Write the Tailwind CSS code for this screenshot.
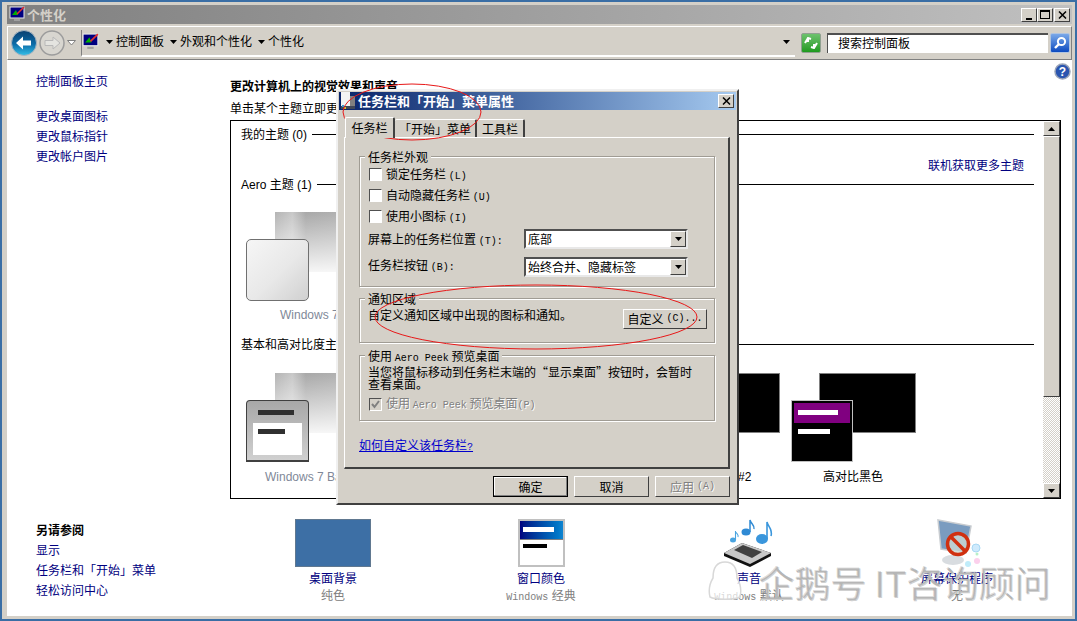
<!DOCTYPE html>
<html lang="zh-CN">
<head>
    <meta charset="UTF-8">
    <title>个性化</title>
    <script src="https://cdn.jsdelivr.net/npm/@tailwindcss/browser@4"></script>
</head>
<body class="w-[1077px] h-[621px] overflow-hidden bg-[#3a6ea5] font-['Liberation_Sans','Noto_Sans_CJK_SC',sans-serif] text-[12px] leading-[14px] text-black">
    <div class="relative w-[1077px] h-[621px] p-[2px]">

        <!-- main window -->
        <div class="flex flex-col w-[1073px] h-[617px] bg-[#d4d0c8] pt-[3px] pl-[5px] pr-[3px] pb-[3px]">
            <!-- title bar -->
            <div class="flex items-center h-[19px] shrink-0 pl-[2px] pr-[2px] bg-gradient-to-r from-[#808080] to-[#c0c0c0]">
                <svg width="17" height="17" viewBox="0 0 17 17">
                    <rect x="1" y="1" width="14" height="11" fill="#000080" stroke="#e8e8e8"/>
                    <path d="M3 9 L7 4 L9 9Z" fill="#00b000"/>
                    <path d="M8 8 L15 1" stroke="#e03030" stroke-width="1.6"/>
                    <rect x="5" y="13" width="6" height="2" fill="#a0a0a0"/>
                </svg>
                <span class="ml-[1px] font-bold text-[#d4d0c8] text-[13px] font-['Noto_Sans_CJK_SC']">个性化</span>
                <div class="ml-auto flex">
                    <div class="w-[16px] h-[14px] bg-[#d4d0c8] border-t border-l border-white border-r border-b border-r-[#404040] border-b-[#404040] flex items-end justify-center pb-[1px]"><div class="w-[6px] h-[2px] bg-black"></div></div>
                    <div class="w-[16px] h-[14px] bg-[#d4d0c8] border-t border-l border-white border-r border-b border-r-[#404040] border-b-[#404040] flex items-center justify-center"><div class="w-[10px] h-[9px] border border-t-2 border-black"></div></div>
                    <div class="ml-[1px] w-[16px] h-[14px] bg-[#d4d0c8] border-t border-l border-white border-r border-b border-r-[#404040] border-b-[#404040] flex items-center justify-center">
                        <svg width="9" height="8" viewBox="0 0 9 8"><path d="M1 0.5 L8 7.5 M8 0.5 L1 7.5" stroke="#000" stroke-width="1.5"/></svg>
                    </div>
                </div>
            </div>

            <!-- toolbar -->
            <div class="flex items-center h-[34px] shrink-0 mt-[2px] border border-t-white border-l-white border-r-[#808080] border-b-[#808080] pl-[2px] pr-[1px]">
                <svg width="28" height="28" viewBox="0 0 28 28">
                    <defs><linearGradient id="bk" x1="0" y1="0" x2="0" y2="1"><stop offset="0" stop-color="#0a3f70"/><stop offset="0.55" stop-color="#0c6ca8"/><stop offset="1" stop-color="#35c0e8"/></linearGradient></defs>
                    <circle cx="14" cy="14" r="12.5" fill="url(#bk)" stroke="#a8b4c0"/>
                    <path d="M6 14 L13 7.5 V11.5 H21 V16.5 H13 V20.5Z" fill="#fff"/>
                </svg>
                <svg class="ml-[1px]" width="27" height="28" viewBox="0 0 27 28">
                    <circle cx="13" cy="14" r="12" fill="#d8d6d0" stroke="#9c9c9c" stroke-width="1.5"/>
                    <path d="M21 14 L14 8 V11.5 H6 V16.5 H14 V20Z" fill="#e4e4e0" stroke="#b8b8b8"/>
                </svg>
                <svg class="ml-[1px]" width="9" height="6" viewBox="0 0 9 6"><path d="M0.5 0.5 H8.5 L4.5 5Z" fill="#fff" stroke="#808080"/></svg>
                <!-- address box -->
                <div class="flex items-center w-[714px] h-[27px] ml-[5px] border-l border-l-[#808080] border-b-2 border-b-white">
                    <svg width="18" height="18" viewBox="0 0 17 17">
                        <rect x="1" y="1" width="14" height="11" fill="#000080" stroke="#e8e8e8"/>
                        <path d="M3 9 L7 4 L9 9Z" fill="#00b000"/>
                        <path d="M8 8 L15 1" stroke="#e03030" stroke-width="1.6"/>
                        <rect x="5" y="13" width="6" height="2" fill="#a0a0a0"/>
                    </svg>
                    <svg class="ml-[6px]" width="7" height="4" viewBox="0 0 7 4"><path d="M0 0 H7 L3.5 4Z"/></svg>
                    <span class="ml-[3px]">控制面板</span>
                    <svg class="ml-[6px]" width="7" height="4" viewBox="0 0 7 4"><path d="M0 0 H7 L3.5 4Z"/></svg>
                    <span class="ml-[3px]">外观和个性化</span>
                    <svg class="ml-[6px]" width="7" height="4" viewBox="0 0 7 4"><path d="M0 0 H7 L3.5 4Z"/></svg>
                    <span class="ml-[3px]">个性化</span>
                    <svg class="ml-auto mr-[5px]" width="7" height="4" viewBox="0 0 7 4"><path d="M0 0 H7 L3.5 4Z"/></svg>
                </div>
                <!-- refresh -->
                <div class="ml-[6px] w-[20px] h-[20px] rounded-[2px] border border-[#90a090] bg-gradient-to-b from-[#6cc26c] to-[#1c9a1c] flex items-center justify-center">
                    <svg width="14" height="12" viewBox="0 0 14 12"><path d="M1 6 L4 1 L7 2 M4 1 V5 M13 6 L10 11 L7 10 M10 11 V7" fill="none" stroke="#fff" stroke-width="2"/></svg>
                </div>
                <!-- search -->
                <div class="ml-[6px] w-[221px] h-[20px] bg-white border-t-2 border-l border-[#505050] flex items-center pl-[10px]">搜索控制面板</div>
                <div class="ml-[2px] w-[20px] h-[20px] rounded-[2px] border border-[#b0c4e0] bg-gradient-to-b from-[#7aa8e8] to-[#0a4ac0] flex items-center justify-center">
                    <svg width="14" height="14" viewBox="0 0 14 14"><circle cx="8.5" cy="5.5" r="3.6" fill="none" stroke="#fff" stroke-width="2"/><path d="M6 8 L2 12" stroke="#fff" stroke-width="2.4"/></svg>
                </div>
            </div>

            <!-- content area -->
            <div class="relative flex-1 bg-white flex">
                <!-- help -->
                <svg class="absolute top-[3px] right-[1px]" width="17" height="17" viewBox="0 0 17 17">
                    <circle cx="8.5" cy="8.5" r="7.5" fill="#2a55b0" stroke="#9aa4b8" stroke-width="1.5"/>
                    <text x="8.5" y="13" text-anchor="middle" font-size="12" font-weight="700" font-family="Liberation Sans" fill="#fff">?</text>
                </svg>

                <!-- left column -->
                <div class="w-[223px] shrink-0 pl-[29px] pt-[15px] flex flex-col text-[#000080]">
                    <a>控制面板主页</a>
                    <a class="mt-[21px]">更改桌面图标</a>
                    <a class="mt-[6px]">更改鼠标指针</a>
                    <a class="mt-[6px]">更改帐户图片</a>
                    <div class="mt-auto mb-[18px] flex flex-col gap-[6px]">
                        <span class="font-bold text-black">另请参阅</span>
                        <a>显示</a>
                        <a>任务栏和「开始」菜单</a>
                        <a>轻松访问中心</a>
                    </div>
                </div>

                <!-- right column -->
                <div class="flex-1 flex flex-col pt-[20px] pr-[11px]">
                    <h1 class="font-bold">更改计算机上的视觉效果和声音</h1>
                    <p class="mt-[8px]">单击某个主题立即更改桌面背景、窗口玻璃颜色、声音和屏幕保护程序。</p>

                    <!-- theme list -->
                    <div class="mt-[4px] h-[379px] border border-black flex">
                        <div class="flex-1 relative pl-[10px] pr-[9px] pt-[7px] flex flex-col">
                            <div class="flex items-center gap-[5px]"><span>我的主题 (0)</span><div class="flex-1 h-px mb-[2px] bg-black"></div></div>
                            <div class="text-right pr-[10px] mt-[17px] text-[#000080]">联机获取更多主题</div>
                            <div class="flex items-center gap-[5px] mt-[5px]"><span>Aero 主题 (1)</span><div class="flex-1 h-px mb-[2px] bg-black"></div></div>

                            <!-- aero thumb -->
                            <div class="relative mt-[20px] h-[89px]">
                                <div class="absolute left-[34px] top-0 w-[96px] h-[60px] bg-[linear-gradient(to_right,#b4b4b4,#c8c8c8_18%,#a8a8a8_32%,#b8b8b8)]">
                                    <div class="h-full bg-gradient-to-t from-white/90 to-transparent"></div>
                                </div>
                                <div class="absolute left-[5px] top-[27px] w-[63px] h-[62px] rounded-[5px] border border-[#707070] bg-[linear-gradient(135deg,#f6f6f6,#e8e8e8_55%,#d0d0d0)]"></div>
                            </div>
                            <div class="mt-[7px] pl-[39px] text-[#808898]">Windows 7</div>
                            <div class="mt-[16px] flex items-center gap-[5px]"><span>基本和高对比度主题</span><div class="flex-1 h-px mb-[2px] bg-black"></div></div>

                            <!-- basic + high contrast thumbs -->
                            <div class="relative mt-[21px] h-[89px]">
                                <div class="absolute left-[34px] top-0 w-[96px] h-[60px] bg-[linear-gradient(to_right,#b4b4b4,#c8c8c8_18%,#a8a8a8_32%,#b8b8b8)]">
                                    <div class="h-full bg-gradient-to-t from-white/90 to-transparent"></div>
                                </div>
                                <div class="absolute left-[5px] top-[27px] w-[63px] h-[62px] rounded-t-[4px] border border-[#404040] border-b-2 bg-gradient-to-b from-[#a8a8a8] to-[#d0d0d0] px-[6px] pt-[9px]">
                                    <div class="h-[5px] w-[36px] mx-[5px] bg-[#303030]"></div>
                                    <div class="mt-[8px] h-[32px] bg-white pt-[6px] pl-[5px]"><div class="h-[5px] w-[27px] bg-[#303030]"></div></div>
                                </div>
                                <div class="absolute left-[496px] top-0 w-[43px] h-[60px] bg-black border border-[#808080]"></div>
                                <div class="absolute left-[578px] top-0 w-[97px] h-[60px] bg-black border border-[#808080]"></div>
                                <div class="absolute left-[550px] top-[27px] w-[62px] h-[62px] bg-black border border-[#c0c0c0] p-[2px]">
                                    <div class="h-[20px] bg-[#800080] pt-[7px] pl-[4px]"><div class="h-[5px] w-[40px] bg-white"></div></div>
                                    <div class="mt-[6px] ml-[4px] h-[5px] w-[32px] bg-white"></div>
                                </div>
                            </div>
                            <div class="relative mt-[8px] h-[14px]">
                                <span class="absolute left-[24px] text-[#808898]">Windows 7 Basic</span>
                                <span class="absolute left-[497px]">#2</span>
                                <span class="absolute left-[582px]">高对比黑色</span>
                            </div>
                        </div>
                        <!-- scrollbar -->
                        <div class="w-[17px] flex flex-col bg-[repeating-conic-gradient(#d4d0c8_0_25%,#fff_0_50%)] bg-[length:2px_2px]">
                            <div class="h-[15px] bg-[#d4d0c8] border border-t-white border-l-white border-r-[#404040] border-b-[#404040] flex items-center justify-center"><svg width="7" height="4" viewBox="0 0 7 4"><path d="M0 4 H7 L3.5 0Z"/></svg></div>
                            <div class="h-[261px] bg-[#d4d0c8] border border-t-white border-l-white border-r-[#404040] border-b-[#404040]"></div>
                            <div class="mt-auto h-[15px] bg-[#d4d0c8] border border-t-white border-l-white border-r-[#404040] border-b-[#404040] flex items-center justify-center"><svg width="7" height="4" viewBox="0 0 7 4"><path d="M0 0 H7 L3.5 4Z"/></svg></div>
                        </div>
                    </div>

                    <!-- see-also strip -->
                    <div class="grid grid-cols-[repeat(4,208px)] mt-[20px] -ml-[1px] text-center text-[#000080]">
                        <div class="flex flex-col items-center">
                            <div class="h-[48px] w-[76px] bg-[#3d6fa5] border border-[#607890]"></div>
                            <span class="mt-[5px]">桌面背景</span>
                            <span class="mt-[3px] text-[#808080]">纯色</span>
                        </div>
                        <div class="flex flex-col items-center">
                            <div class="h-[48px] w-[47px] bg-white border-2 border-[#c0c0c0]">
                                <div class="h-[19px] bg-gradient-to-r from-[#000080] to-[#1084d0] border-b border-[#808080] pt-[6px] pl-[3px]"><div class="h-[5px] w-[31px] bg-white"></div></div>
                                <div class="mt-[4px] ml-[3px] h-[4px] w-[24px] bg-black"></div>
                            </div>
                            <span class="mt-[5px]">窗口颜色</span>
                            <span class="mt-[3px] text-[#808080]"><span class="font-['Liberation_Mono'] text-[10px]">Windows</span> 经典</span>
                        </div>
                        <div class="flex flex-col items-center">
                            <svg width="50" height="48" viewBox="0 0 50 48">
                                <path d="M0 34 L18 24 L47 34 L47 37 L26 48 L0 37Z" fill="#101010"/>
                                <path d="M0 34 L18 24 L47 34 L26 45Z" fill="#c8c8c8"/>
                                <path d="M10 31 L19 26 L38 33 L28 39Z" fill="#404040"/>
                                <ellipse cx="38" cy="20" rx="6" ry="5" fill="#3a96dc"/>
                                <path d="M43 20 V3 C44 8 49 10 47 17" fill="none" stroke="#3a96dc" stroke-width="1.6"/>
                                <ellipse cx="22" cy="13" rx="4.5" ry="3.5" fill="#2f8ad4"/>
                                <path d="M26 13 V1 C27 5 31 6 30 10" fill="none" stroke="#2f8ad4" stroke-width="1.5"/>
                                <ellipse cx="9" cy="21" rx="3" ry="2.5" fill="#4aa4e0"/>
                                <path d="M11.5 21 V12 C12 15 15 15 14 18" fill="none" stroke="#4aa4e0" stroke-width="1.1"/>
                            </svg>
                            <span class="mt-[5px]">声音</span>
                            <span class="mt-[3px] text-[#808080]"><span class="font-['Liberation_Mono'] text-[10px]">Windows</span> 默认</span>
                        </div>
                        <div class="flex flex-col items-center">
                            <svg width="52" height="48" viewBox="0 0 52 48">
                                <ellipse cx="22" cy="41" rx="11" ry="5" fill="#d8dce0"/>
                                <path d="M7 1 L40 7 L35 34 L10 30Z" fill="#7a9cc0" stroke="#c8ccd0" stroke-width="1.5"/>
                                <circle cx="27" cy="25" r="10.5" fill="#d8e4d8" fill-opacity="0.7" stroke="#d03010" stroke-width="3.5"/>
                                <path d="M20 18 L34 32" stroke="#d03010" stroke-width="3.5"/>
                                <circle cx="45" cy="29" r="4" fill="#cfeafc" stroke="#a8d8f4"/>
                                <circle cx="46" cy="35" r="1.5" fill="#b8f0c8"/>
                                <circle cx="46" cy="42" r="3" fill="#fcd0ec"/>
                                <circle cx="37" cy="45" r="3" fill="#c0ecfa"/>
                            </svg>
                            <span class="mt-[5px]">屏幕保护程序</span>
                            <span class="mt-[3px] text-[#808080]">无</span>
                        </div>
                    </div>
                </div>
            </div>
        </div>

        <!-- properties dialog -->
        <div class="absolute left-[336px] top-[89px] w-[403px] h-[416px] bg-[#d4d0c8] border-2 border-t-[#f0f0f0] border-l-[#f0f0f0] border-r-[#404040] border-b-[#404040] p-px font-['Noto_Sans_CJK_SC','Liberation_Sans',sans-serif]">
            <div class="flex items-center h-[18px] bg-gradient-to-r from-[#0a246a] to-[#a6caf0] pr-[2px]">
                <svg width="16" height="18" viewBox="0 0 16 18">
                    <rect x="2" y="0" width="9" height="14" fill="#f4f4f4"/>
                    <rect x="11" y="4" width="5" height="10" fill="#808080"/>
                    <rect x="2" y="14" width="14" height="3" fill="#404858"/>
                    <rect x="3" y="13" width="2" height="2" fill="#3a9ad0"/>
                    <rect x="5" y="15" width="2" height="2" fill="#e0c030"/>
                </svg>
                <span class="ml-[3px] font-bold text-[13px] text-white">任务栏和「开始」菜单属性</span>
                <div class="ml-auto w-[16px] h-[14px] bg-[#d4d0c8] border border-t-white border-l-white border-r-[#404040] border-b-[#404040] flex items-center justify-center">
                    <svg width="9" height="8" viewBox="0 0 9 8"><path d="M1 0.5 L8 7.5 M8 0.5 L1 7.5" stroke="#000" stroke-width="1.5"/></svg>
                </div>
            </div>

            <!-- tabs -->
            <div class="flex items-end h-[20px] mt-[7px] ml-[6px]">
                <div class="relative z-10 w-[50px] h-[21px] -mb-px bg-[#d4d0c8] border-t border-l border-white border-r-2 border-r-[#404040] rounded-t-[2px] flex items-center justify-center">任务栏</div>
                <div class="w-[82px] h-[18px] border-t border-white border-r-2 border-r-[#404040] rounded-t-[2px] flex items-center justify-center">「开始」菜单</div>
                <div class="w-[48px] h-[18px] border-t border-white border-r-2 border-r-[#404040] rounded-t-[2px] flex items-center justify-center">工具栏</div>
            </div>

            <!-- tab page -->
            <div class="ml-[5px] w-[386px] h-[332px] border-t border-l border-t-white border-l-white border-r-2 border-b-2 border-r-[#404040] border-b-[#404040] pl-[14px] pr-[13px] pt-[18px] flex flex-col">
                <!-- appearance group -->
                <div class="relative h-[131px] border border-[#a09c94] shadow-[1px_1px_0_#fff,inset_1px_1px_0_#fff] pl-[8px] pt-[10px] flex flex-col shrink-0">
                    <span class="absolute -top-[7px] left-[5px] bg-[#d4d0c8] px-[3px]">任务栏外观</span>
                    <label class="flex items-center gap-[4px] pl-px h-[14px]"><span class="w-[13px] h-[13px] bg-white border border-t-[#505050] border-l-[#505050] border-r-white border-b-white"></span><span class="pt-[2px]">锁定任务栏 <span class="font-['Liberation_Mono'] text-[10px]">(L)</span></span></label>
                    <label class="flex items-center gap-[4px] pl-px h-[14px] mt-[7px]"><span class="w-[13px] h-[13px] bg-white border border-t-[#505050] border-l-[#505050] border-r-white border-b-white"></span><span class="pt-[2px]">自动隐藏任务栏 <span class="font-['Liberation_Mono'] text-[10px]">(U)</span></span></label>
                    <label class="flex items-center gap-[4px] pl-px h-[14px] mt-[7px]"><span class="w-[13px] h-[13px] bg-white border border-t-[#505050] border-l-[#505050] border-r-white border-b-white"></span><span class="pt-[2px]">使用小图标 <span class="font-['Liberation_Mono'] text-[10px]">(I)</span></span></label>
                    <div class="flex items-center h-[20px] mt-[6px]">
                        <span class="w-[156px] shrink-0 pt-[2px]">屏幕上的任务栏位置 <span class="font-['Liberation_Mono'] text-[10px]">(T):</span></span>
                        <div class="w-[164px] h-[20px] bg-white border-2 border-t-[#505050] border-l-[#505050] border-r-[#e8e8e8] border-b-[#e8e8e8] flex items-center justify-between pl-[2px]">底部
                            <div class="w-[16px] h-[16px] bg-[#d4d0c8] border border-t-white border-l-white border-r-[#404040] border-b-[#404040] flex items-center justify-center"><svg width="7" height="4" viewBox="0 0 7 4"><path d="M0 0 H7 L3.5 4Z"/></svg></div>
                        </div>
                    </div>
                    <div class="flex items-center h-[20px] mt-[8px]">
                        <span class="w-[156px] shrink-0 pb-[2px]">任务栏按钮 <span class="font-['Liberation_Mono'] text-[10px]">(B):</span></span>
                        <div class="w-[164px] h-[20px] bg-white border-2 border-t-[#505050] border-l-[#505050] border-r-[#e8e8e8] border-b-[#e8e8e8] flex items-center justify-between pl-[2px]">始终合并、隐藏标签
                            <div class="w-[16px] h-[16px] bg-[#d4d0c8] border border-t-white border-l-white border-r-[#404040] border-b-[#404040] flex items-center justify-center"><svg width="7" height="4" viewBox="0 0 7 4"><path d="M0 0 H7 L3.5 4Z"/></svg></div>
                        </div>
                    </div>
                </div>

                <!-- notification group -->
                <div class="relative h-[45px] mt-[11px] border border-[#a09c94] shadow-[1px_1px_0_#fff,inset_1px_1px_0_#fff] pl-[8px] pr-[7px] pt-[9px] flex items-start justify-between shrink-0">
                    <span class="absolute -top-[7px] left-[5px] bg-[#d4d0c8] px-[3px]">通知区域</span>
                    <span>自定义通知区域中出现的图标和通知。</span>
                    <div class="mt-px w-[84px] h-[20px] bg-[#d4d0c8] border border-t-white border-l-white border-r-[#404040] border-b-[#404040] flex items-center justify-center">自定义 <span class="font-['Liberation_Mono'] text-[10px] ml-[3px]">(C)...</span></div>
                </div>

                <!-- peek group -->
                <div class="relative h-[66px] mt-[12px] border border-[#a09c94] shadow-[1px_1px_0_#fff,inset_1px_1px_0_#fff] pl-[8px] pt-[10px] flex flex-col shrink-0">
                    <span class="absolute -top-[7px] left-[5px] bg-[#d4d0c8] px-[3px]">使用 <span class="font-['Liberation_Mono'] text-[10px]">Aero Peek</span> 预览桌面</span>
                    <p class="leading-[12px]">当您将鼠标移动到任务栏末端的“显示桌面”按钮时，会暂时<br>查看桌面。</p>
                    <label class="flex items-center gap-[4px] pl-px h-[14px] mt-[7px] text-[#808080] [text-shadow:1px_1px_0_#fff]">
                        <span class="w-[13px] h-[13px] bg-[#d4d0c8] border border-t-[#505050] border-l-[#505050] border-r-white border-b-white flex items-center justify-center">
                            <svg width="9" height="9" viewBox="0 0 9 9"><path d="M1 4 L3.5 7 L8 1" fill="none" stroke="#808080" stroke-width="2"/></svg>
                        </span>
                        <span>使用 <span class="font-['Liberation_Mono'] text-[10px]">Aero Peek</span> 预览桌面<span class="font-['Liberation_Mono'] text-[10px]">(P)</span></span>
                    </label>
                </div>

                <a class="mt-[17px] text-[#0000cc] underline">如何自定义该任务栏<span class="font-['Liberation_Mono'] text-[10px]">?</span></a>
            </div>

            <!-- dialog buttons -->
            <div class="flex justify-end gap-[6px] mt-[7px] mr-[6px]">
                <div class="w-[75px] h-[21px] bg-[#d4d0c8] border border-black shadow-[inset_-1px_-1px_0_#808080,inset_1px_1px_0_#fff] flex items-center justify-center">确定</div>
                <div class="w-[75px] h-[21px] bg-[#d4d0c8] border border-t-white border-l-white border-r-[#404040] border-b-[#404040] flex items-center justify-center">取消</div>
                <div class="w-[75px] h-[21px] bg-[#d4d0c8] border border-t-white border-l-white border-r-[#404040] border-b-[#404040] flex items-center justify-center text-[#808080] [text-shadow:1px_1px_0_#fff]">应用 <span class="font-['Liberation_Mono'] text-[10px] ml-[3px]">(A)</span></div>
            </div>
        </div>

        <!-- red annotation ellipses drawn over the screenshot -->
        <svg class="absolute left-0 top-0 pointer-events-none" width="1077" height="621" viewBox="0 0 1077 621">
            <ellipse cx="412" cy="112" rx="69" ry="28" fill="none" stroke="#e81818"/>
            <ellipse cx="536" cy="317" rx="161" ry="32" fill="none" stroke="#e81818"/>
        </svg>

        <!-- watermark -->
        <div class="absolute left-[707px] top-[561px] flex items-center pointer-events-none">
            <svg width="36" height="40" viewBox="0 0 36 40">
                <path d="M18 1 C8 1 6 10 6 17 C3 22 1 28 3 36 C8 39 28 39 33 36 C35 28 33 22 30 17 C30 10 28 1 18 1Z" fill="#fff" fill-opacity="0.7" stroke="#d8d8d8" stroke-width="1.5"/>
            </svg>
            <span class="ml-[15px] text-[36px] leading-[40px] whitespace-nowrap text-black/15 font-['Noto_Sans_CJK_SC'] [text-shadow:1px_1px_0_#d0d0d0]">企鹅号 IT咨询顾问</span>
        </div>
    </div>
</body>
</html>
